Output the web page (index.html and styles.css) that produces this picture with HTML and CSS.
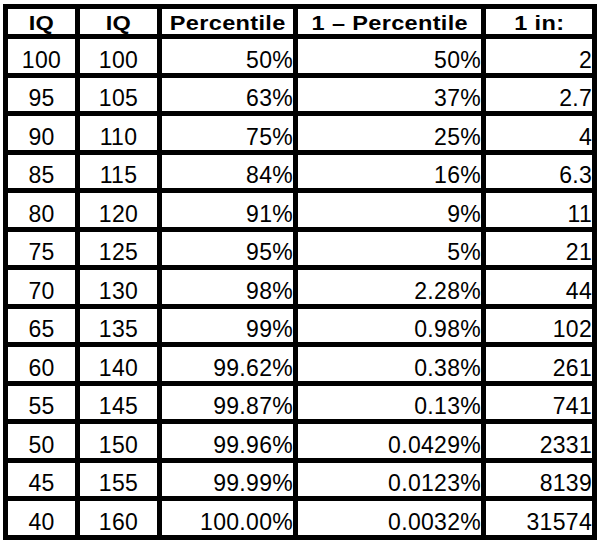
FILE: index.html
```html
<!DOCTYPE html>
<html>
<head>
<meta charset="utf-8">
<link rel="stylesheet" href="styles.css">
</head>
<body>
<div class="table">
  <div class="c h"><span class="hs">IQ</span></div><div class="c h"><span class="hs">IQ</span></div><div class="c h"><span class="hs">Percentile</span></div><div class="c h"><span class="hs">1 – Percentile</span></div><div class="c h"><span class="hs">1 in:</span></div>
  <div class="c m">100</div><div class="c m">100</div><div class="c r">50%</div><div class="c r">50%</div><div class="c r">2</div>
  <div class="c m">95</div><div class="c m">105</div><div class="c r">63%</div><div class="c r">37%</div><div class="c r">2.7</div>
  <div class="c m">90</div><div class="c m">110</div><div class="c r">75%</div><div class="c r">25%</div><div class="c r">4</div>
  <div class="c m">85</div><div class="c m">115</div><div class="c r">84%</div><div class="c r">16%</div><div class="c r">6.3</div>
  <div class="c m">80</div><div class="c m">120</div><div class="c r">91%</div><div class="c r">9%</div><div class="c r">11</div>
  <div class="c m">75</div><div class="c m">125</div><div class="c r">95%</div><div class="c r">5%</div><div class="c r">21</div>
  <div class="c m">70</div><div class="c m">130</div><div class="c r">98%</div><div class="c r">2.28%</div><div class="c r">44</div>
  <div class="c m">65</div><div class="c m">135</div><div class="c r">99%</div><div class="c r">0.98%</div><div class="c r">102</div>
  <div class="c m">60</div><div class="c m">140</div><div class="c r">99.62%</div><div class="c r">0.38%</div><div class="c r">261</div>
  <div class="c m">55</div><div class="c m">145</div><div class="c r">99.87%</div><div class="c r">0.13%</div><div class="c r">741</div>
  <div class="c m">50</div><div class="c m">150</div><div class="c r">99.96%</div><div class="c r">0.0429%</div><div class="c r">2331</div>
  <div class="c m">45</div><div class="c m">155</div><div class="c r">99.99%</div><div class="c r">0.0123%</div><div class="c r">8139</div>
  <div class="c m">40</div><div class="c m">160</div><div class="c r">100.00%</div><div class="c r">0.0032%</div><div class="c r">31574</div>
</div>
</body>
</html>
```
FILE: styles.css
```css
html, body {
  background: #fff;
}
body {
  margin: 4px 0 0 3px;
  font-family: "Liberation Sans", Arial, sans-serif;
  color: #000;
}
.table {
  display: grid;
  width: 594px;
  box-sizing: border-box;
  grid-template-columns: 67px 77px 131px 183px 106px;
  grid-template-rows: 25px 34px 33px 34px 33px 34px 33px 34px 33px 34px 33px 34px 33px 34px;
  gap: 5px;
  padding: 5px;
  background: #000;
}
.c {
  background: #fff;
  display: flex;
  align-items: flex-end;
  font-size: 23px;
  line-height: 23px;
  letter-spacing: 0.3px;
  padding-bottom: 1px;
  white-space: nowrap;
}
.h {
  justify-content: center;
  font-weight: bold;
  font-size: 21px;
  line-height: 21px;
  padding-bottom: 1px;
}
.hs {
  display: inline-block;
  letter-spacing: 0.3px;
  transform: scaleX(1.12);
}
.m {
  justify-content: center;
}
.r {
  justify-content: flex-end;
  padding-right: 0;
}
```
